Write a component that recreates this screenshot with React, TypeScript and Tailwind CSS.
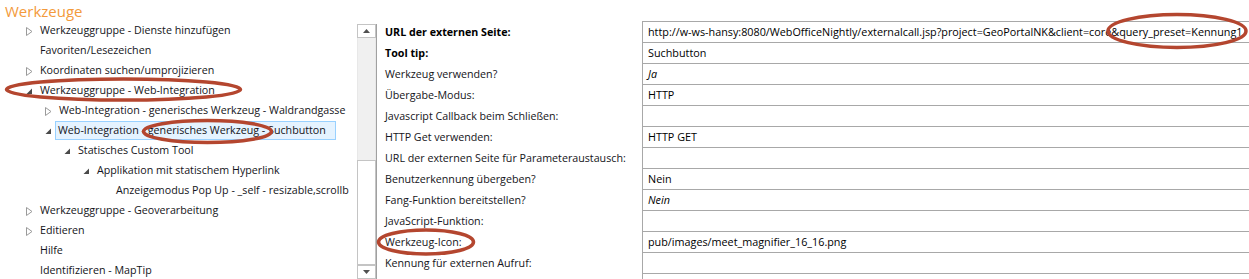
import React from 'react'

type TreeItem = {
  label: string
  level: number
  state?: 'open' | 'closed'
  selected?: boolean
}

const tree: TreeItem[] = [
  { label: 'Werkzeuggruppe - Dienste hinzufügen', level: 0, state: 'closed' },
  { label: 'Favoriten/Lesezeichen', level: 0 },
  { label: 'Koordinaten suchen/umprojizieren', level: 0, state: 'closed' },
  { label: 'Werkzeuggruppe - Web-Integration', level: 0, state: 'open' },
  { label: 'Web-Integration - generisches Werkzeug - Waldrandgasse', level: 1, state: 'closed' },
  { label: 'Web-Integration - generisches Werkzeug - Suchbutton', level: 1, state: 'open', selected: true },
  { label: 'Statisches Custom Tool', level: 2, state: 'open' },
  { label: 'Applikation mit statischem Hyperlink', level: 3, state: 'open' },
  { label: 'Anzeigemodus Pop Up - _self - resizable,scrollb', level: 4 },
  { label: 'Werkzeuggruppe - Geoverarbeitung', level: 0, state: 'closed' },
  { label: 'Editieren', level: 0, state: 'closed' },
  { label: 'Hilfe', level: 0 },
  { label: 'Identifizieren - MapTip', level: 0 },
]

const indent = ['pl-[26px]', 'pl-[45px]', 'pl-[64px]', 'pl-[83px]', 'pl-[102px]']

type Prop = { label: string; value?: string; bold?: boolean; italic?: boolean }

const props: Prop[] = [
  {
    label: 'URL der externen Seite:',
    value: 'http://w-ws-hansy:8080/WebOfficeNightly/externalcall.jsp?project=GeoPortalNK&client=core&query_preset=Kennung1',
    bold: true,
  },
  { label: 'Tool tip:', value: 'Suchbutton', bold: true },
  { label: 'Werkzeug verwenden?', value: 'Ja', italic: true },
  { label: 'Übergabe-Modus:', value: 'HTTP' },
  { label: 'Javascript Callback beim Schließen:' },
  { label: 'HTTP Get verwenden:', value: 'HTTP GET' },
  { label: 'URL der externen Seite für Parameteraustausch:' },
  { label: 'Benutzerkennung übergeben?', value: 'Nein' },
  { label: 'Fang-Funktion bereitstellen?', value: 'Nein', italic: true },
  { label: 'JavaScript-Funktion:' },
  { label: 'Werkzeug-Icon:', value: 'pub/images/meet_magnifier_16_16.png' },
  { label: 'Kennung für externen Aufruf:' },
  { label: '' },
]

function Arrow({ state }: { state?: 'open' | 'closed' }) {
  if (state === 'closed') {
    return (
      <svg width="7" height="9" viewBox="0 0 7 9" className="mt-px">
        <path d="M0.5 0.5 L6 4.5 L0.5 8.5 Z" fill="white" stroke="#9a9a9a" strokeWidth="1" />
      </svg>
    )
  }
  if (state === 'open') {
    return (
      <svg width="7" height="7" viewBox="0 0 7 7" className="mt-[2px]">
        <path d="M6 0.5 L6 6 L0.5 6 Z" fill="#4a4a4a" />
      </svg>
    )
  }
  return null
}

function TreeRow({ item }: { item: TreeItem }) {
  return (
    <div className={`flex h-5 items-center whitespace-nowrap pt-px ${indent[item.level]}`}>
      <div className="flex w-[14px] shrink-0 items-center">
        <Arrow state={item.state} />
      </div>
      {item.selected ? (
        <span className="-ml-[4px] flex h-[19px] items-center border border-[#99d1ff] bg-[#e5f3ff] pl-[2px] pr-[9px]">
          {item.label}
        </span>
      ) : (
        <span>{item.label}</span>
      )}
    </div>
  )
}

export default function App() {
  return (
    <div
      className="relative flex h-[279px] w-[1249px] overflow-hidden bg-white text-[10.7px] text-[#141420]"
      style={{ fontFamily: '"Segoe UI", "Open Sans", sans-serif' }}
    >
      {/* tree */}
      <div className="w-[355px] shrink-0 overflow-hidden">
        <div className="flex h-5 items-center pl-[5px] pt-px text-[15px] leading-5 text-[#f39a3b]">Werkzeuge</div>
        {tree.map((item, idx) => (
          <TreeRow key={idx} item={item} />
        ))}
      </div>

      {/* scrollbar */}
      <div className="ml-[2px] flex w-[19px] shrink-0 flex-col pt-[24px]">
        <div className="flex h-[14px] items-center justify-center border border-[#c4c4c4] bg-white">
          <svg width="7" height="4" viewBox="0 0 7 4">
            <path d="M0 4 L3.5 0 L7 4 Z" fill="#505050" />
          </svg>
        </div>
        <div className="h-[125px] border-x border-[#e8e8e8] bg-[#f0f0f0]" />
        <div className="h-[108px] border border-[#c4c4c4] bg-white" />
        <div className="flex h-[14px] items-center justify-center border border-[#c4c4c4] bg-white">
          <svg width="7" height="4" viewBox="0 0 7 4">
            <path d="M0 0 L3.5 4 L7 0 Z" fill="#505050" />
          </svg>
        </div>
      </div>
      <div className="mt-[24px] w-px shrink-0 bg-[#a0a0a0]" />

      {/* properties */}
      <div className="flex-1 pt-[21px]">
        {props.map((p, idx) => (
          <div key={idx} className="flex h-[21px]">
            <div
              className={`flex w-[265px] shrink-0 items-center whitespace-nowrap pl-[8px] pt-px ${p.bold ? 'font-bold text-[#000]' : ''}`}
            >
              {p.label}
            </div>
            <div
              className={`flex flex-1 items-center whitespace-nowrap border-l border-t border-[#a8a8a8] pl-[5px] text-[10.8px] text-[#000] ${p.italic ? 'italic' : ''}`}
            >
              {p.value}
            </div>
          </div>
        ))}
      </div>

      {/* annotations */}
      <svg className="pointer-events-none absolute left-0 top-0" width="1249" height="279">
        <g fill="none" stroke="#b4462f" strokeWidth="3.5">
          <ellipse cx="123.5" cy="89.5" rx="117" ry="10.5" />
          <ellipse cx="207.5" cy="131.5" rx="64" ry="11" />
          <ellipse cx="426" cy="242" rx="47.5" ry="12" />
          <ellipse cx="1177" cy="31" rx="69" ry="16.5" />
        </g>
      </svg>
    </div>
  )
}
